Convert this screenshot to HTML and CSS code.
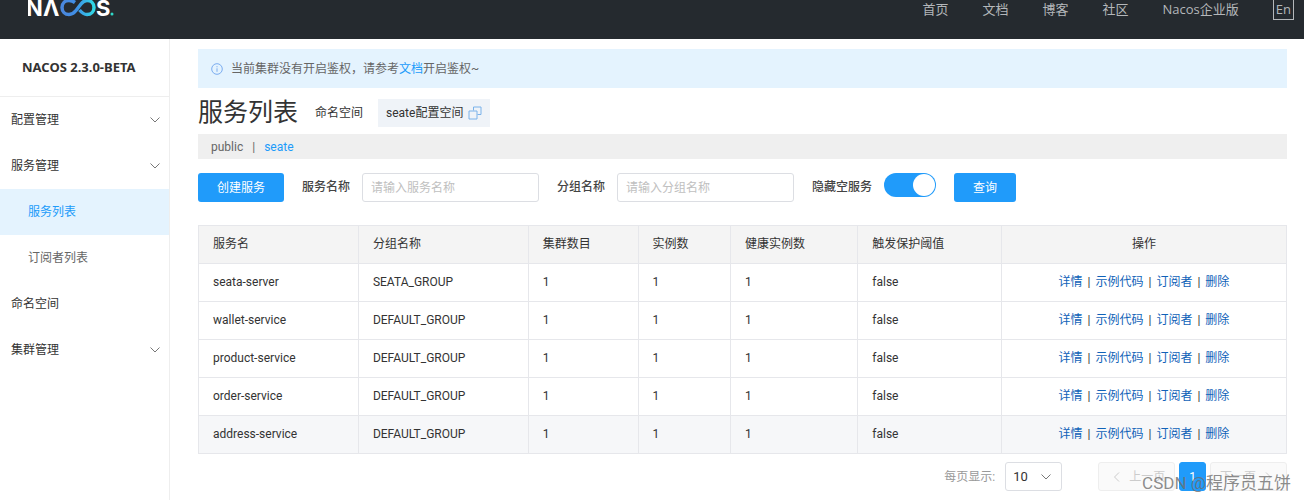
FILE: index.html
```html
<!DOCTYPE html>
<html lang="zh-CN">
<head>
  <meta charset="UTF-8">
  <meta name="viewport" content="width=device-width, initial-scale=1.0">
  <title>Nacos</title>
  <link rel="stylesheet" href="styles.css">
</head>
<body>

<header class="header">
  <a href="#" class="logo" aria-label="Nacos">
    <svg width="88" height="20" viewBox="0 0 88 20">
      <defs>
        <linearGradient id="loop" x1="0" x2="1" y1="0" y2="0">
          <stop offset="0" stop-color="#4a86dc"/>
          <stop offset="0.45" stop-color="#3f8fe6"/>
          <stop offset="1" stop-color="#2fd8e6"/>
        </linearGradient>
      </defs>
      <text class="logo-text" x="-2" y="16">N</text>
      <text class="logo-text" x="15" y="16">Λ</text>
      <path d="M47 2.500 C45 1 43 0.500 41 0.500 C37 0.500 34 3.500 34 7.500 C34 11.500 37 14.500 41 14.500 C44 14.500 46 13 48 10.500 L53 4 C55 1.500 56 0.500 59 0.500 C63 0.500 66 3.500 66 7.500 C66 11.500 63 14.500 59 14.500 C56 14.500 54 13 51.500 10" fill="none" stroke="url(#loop)" stroke-width="3.500"/>
      <text class="logo-text" x="68" y="16">S</text>
      <circle cx="84" cy="14" r="1.500" fill="#2fd8c8"/>
    </svg>
  </a>
  <nav class="top-nav">
    <a href="#">首页</a>
    <a href="#">文档</a>
    <a href="#">博客</a>
    <a href="#">社区</a>
    <a href="#">Nacos企业版</a>
    <button type="button" class="lang">En</button>
  </nav>
</header>

<div class="layout">
  <aside class="sidebar">
    <h2 class="version">NACOS 2.3.0-BETA</h2>
    <nav class="menu">
      <a href="#" class="item">配置管理<svg class="arrow" width="12" height="8" viewBox="0 0 12 8"><path d="M1.500 1.500 L6 6 L10.500 1.500"/></svg></a>
      <a href="#" class="item">服务管理<svg class="arrow" width="12" height="8" viewBox="0 0 12 8"><path d="M1.500 1.500 L6 6 L10.500 1.500"/></svg></a>
      <a href="#" class="item sub active">服务列表</a>
      <a href="#" class="item sub">订阅者列表</a>
      <a href="#" class="item">命名空间</a>
      <a href="#" class="item">集群管理<svg class="arrow" width="12" height="8" viewBox="0 0 12 8"><path d="M1.500 1.500 L6 6 L10.500 1.500"/></svg></a>
    </nav>
  </aside>

  <main class="content">
    <div class="notice">
      <svg class="info" width="12" height="12" viewBox="0 0 12 12"><circle cx="6" cy="6" r="5.300"/><path d="M6 5.300 V8.800 M6 3.200 V4.300"/></svg>
      <p>当前集群没有开启鉴权，请参考<a href="#">文档</a>开启鉴权~</p>
    </div>

    <div class="title-row">
      <h1>服务列表</h1>
      <span class="ns-label">命名空间</span>
      <button type="button" class="ns-value">seate配置空间
        <svg width="14" height="14" viewBox="0 0 14 14"><path d="M5.500 4.500 V1 H13 V8.500 H9.500 M1 5 H9 V13 H1 Z"/></svg>
      </button>
    </div>

    <div class="namespaces">
      <a href="#">public</a>
      <span>|</span>
      <a href="#" class="current">seate</a>
    </div>

    <form class="search">
      <button type="button" class="btn create">创建服务</button>
      <div class="field">
        <label for="serviceName">服务名称</label>
        <input type="text" id="serviceName" placeholder="请输入服务名称">
      </div>
      <div class="field">
        <label for="groupName">分组名称</label>
        <input type="text" id="groupName" placeholder="请输入分组名称">
      </div>
      <div class="field">
        <label for="hideEmpty">隐藏空服务</label>
        <input type="checkbox" id="hideEmpty" class="switch" role="switch" checked>
      </div>
      <button type="button" class="btn">查询</button>
    </form>

    <table class="services">
      <colgroup>
        <col class="c-name">
        <col class="c-group">
        <col class="c-cluster">
        <col class="c-count">
        <col class="c-healthy">
        <col class="c-limit">
        <col class="c-action">
      </colgroup>
      <thead>
        <tr>
          <th>服务名</th>
          <th>分组名称</th>
          <th>集群数目</th>
          <th>实例数</th>
          <th>健康实例数</th>
          <th>触发保护阈值</th>
          <th class="action">操作</th>
        </tr>
      </thead>
      <tbody>
        <tr>
          <td>seata-server</td>
          <td>SEATA_GROUP</td>
          <td>1</td>
          <td>1</td>
          <td>1</td>
          <td>false</td>
          <td class="action"><a href="#">详情</a><i>|</i><a href="#">示例代码</a><i>|</i><a href="#">订阅者</a><i>|</i><a href="#">删除</a></td>
        </tr>
        <tr>
          <td>wallet-service</td>
          <td>DEFAULT_GROUP</td>
          <td>1</td>
          <td>1</td>
          <td>1</td>
          <td>false</td>
          <td class="action"><a href="#">详情</a><i>|</i><a href="#">示例代码</a><i>|</i><a href="#">订阅者</a><i>|</i><a href="#">删除</a></td>
        </tr>
        <tr>
          <td>product-service</td>
          <td>DEFAULT_GROUP</td>
          <td>1</td>
          <td>1</td>
          <td>1</td>
          <td>false</td>
          <td class="action"><a href="#">详情</a><i>|</i><a href="#">示例代码</a><i>|</i><a href="#">订阅者</a><i>|</i><a href="#">删除</a></td>
        </tr>
        <tr>
          <td>order-service</td>
          <td>DEFAULT_GROUP</td>
          <td>1</td>
          <td>1</td>
          <td>1</td>
          <td>false</td>
          <td class="action"><a href="#">详情</a><i>|</i><a href="#">示例代码</a><i>|</i><a href="#">订阅者</a><i>|</i><a href="#">删除</a></td>
        </tr>
        <tr class="hovered">
          <td>address-service</td>
          <td>DEFAULT_GROUP</td>
          <td>1</td>
          <td>1</td>
          <td>1</td>
          <td>false</td>
          <td class="action"><a href="#">详情</a><i>|</i><a href="#">示例代码</a><i>|</i><a href="#">订阅者</a><i>|</i><a href="#">删除</a></td>
        </tr>
      </tbody>
    </table>

    <div class="pagination">
      <label for="pageSize">每页显示:</label>
      <div class="select-wrap">
        <select id="pageSize">
          <option>10</option>
          <option>20</option>
          <option>50</option>
        </select>
        <svg class="arrow" width="12" height="8" viewBox="0 0 12 8"><path d="M1.500 1.500 L6 6 L10.500 1.500"/></svg>
      </div>
      <div class="pages">
        <button type="button" class="page prev" disabled><svg class="arrow" width="8" height="12" viewBox="0 0 8 12"><path d="M6 1.500 L1.500 6 L6 10.500"/></svg>上一页</button>
        <button type="button" class="page on">1</button>
        <button type="button" class="page next" disabled>下一页<svg class="arrow" width="8" height="12" viewBox="0 0 8 12"><path d="M2 1.500 L6.500 6 L2 10.500"/></svg></button>
      </div>
    </div>
  </main>
</div>

<div class="watermark">CSDN @程序员五饼</div>

</body>
</html>
```
FILE: styles.css
```css
* {
  box-sizing: border-box;
}

body {
  margin: 0;
  min-height: 100vh;
  display: flex;
  flex-direction: column;
  overflow: hidden;
  background-color: #fff;
  color: #333;
  font-family: Roboto, "Noto Sans CJK SC", sans-serif;
  font-size: 12px;
  line-height: 18px;
}

a {
  color: inherit;
  text-decoration: none;
}

button, input, select {
  font: inherit;
}

button {
  cursor: pointer;
}

/* Header */
.header {
  display: flex;
  align-items: flex-start;
  justify-content: space-between;
  height: 39px;
  padding: 0 10px 0 28px;
  background-color: #252a2f;
}

.logo svg {
  display: block;
}

.logo-text {
  fill: #fff;
  font-family: Inter, sans-serif;
  font-size: 22px;
  font-weight: 700;
}

.top-nav {
  display: flex;
  gap: 34px;
  color: #b4b7ba;
  font-family: "Open Sans", "Noto Sans CJK SC", sans-serif;
  font-size: 13px;
}

.lang {
  height: 20px;
  padding: 0 2px;
  border: 1px solid #b4b7ba;
  border-top: 0;
  background: none;
  color: inherit;
  line-height: 17px;
}

/* Sidebar */
.layout {
  display: flex;
  flex: 1;
}

.sidebar {
  width: 170px;
  flex: none;
  border-right: 1px solid #eee;
}

.version {
  margin: 0;
  padding: 19px 0 19px 22px;
  border-bottom: 1px solid #eee;
  font-family: "Noto Sans", sans-serif;
  font-size: 13px;
  line-height: 19px;
}

.item {
  display: flex;
  align-items: center;
  justify-content: space-between;
  height: 46px;
  padding: 0 8px 0 11px;
}

.sub {
  padding-left: 28px;
  color: #666;
}

.active {
  background-color: #e4f3fe;
  color: #209bfa;
}

.arrow {
  fill: none;
  stroke: #777;
}

/* Content */
.content {
  flex: 1;
  padding: 10px 17px 0 28px;
}

.notice {
  display: flex;
  align-items: center;
  gap: 8px;
  height: 39px;
  padding: 0 13px;
  background-color: #e4f3fe;
  color: #666;
}

.notice p {
  margin: 0;
}

.notice a {
  color: #209bfa;
}

.info {
  fill: none;
  stroke: #7aacf0;
}

.title-row {
  display: flex;
  align-items: center;
  height: 46px;
  padding-top: 3px;
}

h1 {
  margin: 0 17px 0 0;
  font-size: 25px;
  font-weight: 400;
  line-height: 36px;
}

.ns-value {
  display: flex;
  align-items: center;
  gap: 5px;
  height: 28px;
  margin-left: 15px;
  padding: 0 8px;
  border: 0;
  background-color: #eff3f8;
  color: #333;
}

.ns-value svg {
  fill: none;
  stroke: #7ab2ea;
}

.namespaces {
  display: flex;
  align-items: center;
  gap: 9px;
  height: 25px;
  padding: 0 13px;
  background-color: #efefef;
  color: #666;
}

.current {
  color: #209bfa;
}

/* Search form */
.search {
  display: flex;
  align-items: flex-start;
  gap: 18px;
  padding: 14px 0 23px;
}

.btn {
  height: 29px;
  padding: 0 19px;
  border: 0;
  border-radius: 3px;
  background-color: #209bfa;
  color: #fff;
}

.field {
  display: flex;
  gap: 12px;
}

.field label {
  color: #444;
  font-weight: 500;
  line-height: 28px;
}

.field input[type="text"] {
  width: 177px;
  height: 29px;
  padding: 0 8px;
  border: 1px solid #dcdee3;
  border-radius: 3px;
}

.field input::placeholder {
  color: #c0c0c0;
}

.switch {
  appearance: none;
  display: flex;
  justify-content: flex-end;
  width: 52px;
  height: 24px;
  margin: 0;
  padding: 1px;
  border-radius: 12px;
  background-color: #209bfa;
}

.switch::before {
  content: "";
  width: 22px;
  height: 22px;
  border-radius: 50%;
  background-color: #fff;
}

/* Services table */
.services {
  width: 100%;
  border-collapse: collapse;
  table-layout: fixed;
}

.services th, .services td {
  height: 38px;
  padding: 0 14px 2px;
  border: 1px solid #e6e7eb;
  text-align: left;
  font-weight: 400;
}

.services th {
  background-color: #f4f4f4;
}

.services .action {
  text-align: center;
}

.services .action a {
  color: #0f62b8;
}

.services i {
  margin: 0 5px;
  font-style: normal;
}

.hovered {
  background-color: #f6f7f9;
}

.c-name { width: 14.7%; }
.c-group { width: 15.6%; }
.c-cluster { width: 10.1%; }
.c-count { width: 8.5%; }
.c-healthy { width: 11.7%; }
.c-limit { width: 13.2%; }

/* Pagination */
.pagination {
  display: flex;
  align-items: center;
  justify-content: flex-end;
  padding-top: 8px;
  color: #999;
}

.select-wrap {
  display: flex;
  align-items: center;
  width: 57px;
  height: 29px;
  margin: 0 36px 0 10px;
  padding-right: 9px;
  border: 1px solid #dcdee3;
  border-radius: 3px;
}

.select-wrap select {
  appearance: none;
  flex: 1;
  min-width: 0;
  padding: 0 0 0 7px;
  border: 0;
  background: none;
  color: #333;
  font-size: 13px;
}

.pages {
  display: flex;
  gap: 4px;
}

.page {
  display: flex;
  align-items: center;
  gap: 8px;
  height: 29px;
  padding: 0 9px;
  border: 1px solid #eee;
  border-radius: 3px;
  background-color: #fafafa;
  color: #ccc;
}

.prev {
  padding-left: 14px;
}

.next {
  padding-right: 14px;
}

.page .arrow {
  stroke: #ccc;
}

.on {
  border-color: #209bfa;
  background-color: #209bfa;
  color: #fff;
}

.watermark {
  position: absolute;
  right: 13px;
  bottom: 4px;
  color: rgba(110, 110, 110, 0.8);
  font-size: 17px;
  line-height: 26px;
}
```
